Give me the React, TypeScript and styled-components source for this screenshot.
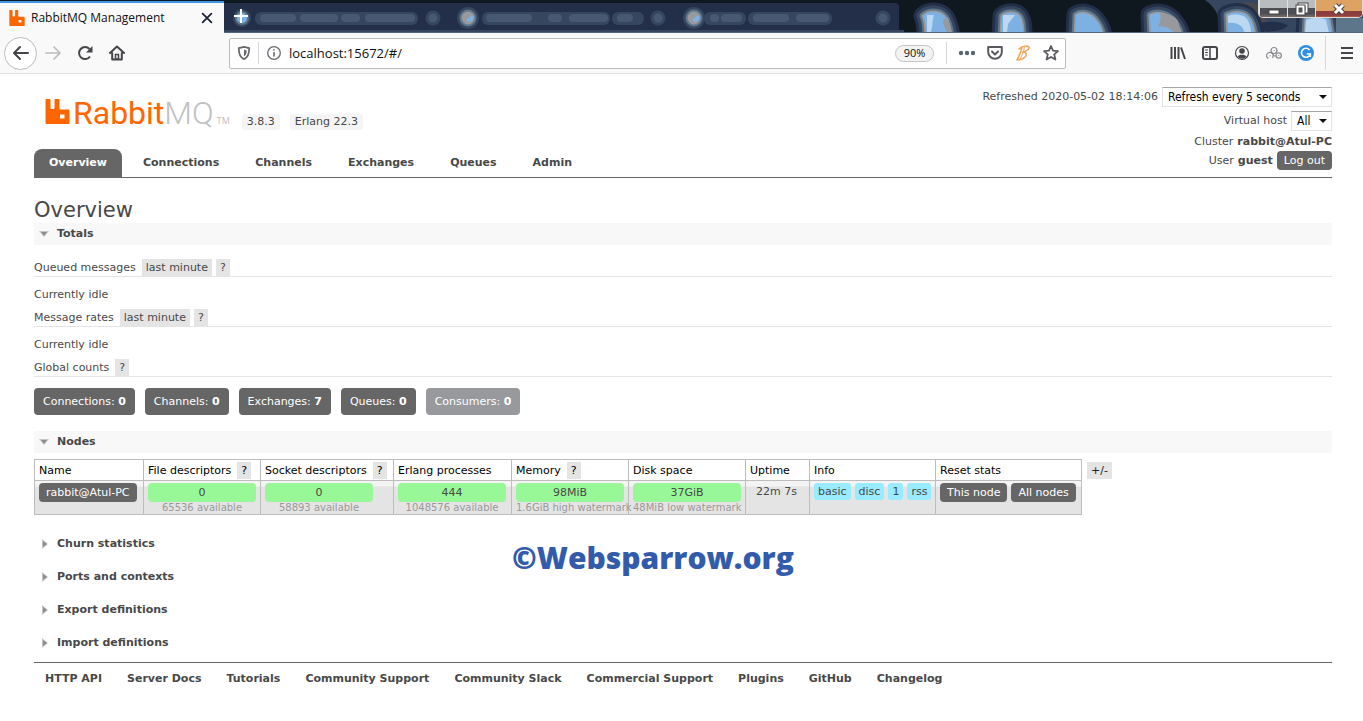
import React from 'react';
import styled, { createGlobalStyle, css } from 'styled-components';

const SANS = '"DejaVu Sans", Verdana, sans-serif';
const CHROME = '"Open Sans", "Segoe UI", sans-serif';

const GlobalStyle = createGlobalStyle`
  * { box-sizing: border-box; }
  body { margin: 0; background: #fff; color: #484848; font: 11px/18px ${SANS}; }
  button, input, select { font: inherit; color: inherit; margin: 0; }
  button { cursor: pointer; }
  a { color: inherit; text-decoration: none; }
`;

/* ---------- browser window ---------- */

const TabStrip = styled.div`
  position: relative;
  display: flex;
  height: 33px;
  background: #0f181e;
  overflow: hidden;
`;
const Backdrop = styled.svg`
  position: absolute;
  inset: 0;
  width: 100%;
  height: 33px;
`;
const ActiveTab = styled.div`
  position: relative;
  display: flex;
  align-items: center;
  width: 224px;
  margin-top: 1px;
  padding: 0 9px;
  gap: 6px;
  background: #f9f9fa;
  border-top: 2px solid #3f93e6;
  font: 12px/16px ${CHROME};
  color: #111;
`;
const TabTitle = styled.span`
  flex: 1;
`;
const BareButton = styled.button<{ $w?: number }>`
  display: flex;
  align-items: center;
  justify-content: center;
  flex: none;
  width: ${(p) => p.$w ?? 32}px;
  height: 32px;
  padding: 0;
  border: 0;
  background: none;
  color: #45454a;
`;
const NewTab = styled(BareButton)`
  position: relative;
`;
const WindowControls = styled.div`
  position: relative;
  display: flex;
  margin-left: auto;
  height: 18px;
  border: 1px solid #dcdcdc;
  border-top: 0;
  border-radius: 0 0 5px 5px;
  overflow: hidden;
`;
const WindowButton = styled.button<{ $close?: boolean }>`
  display: flex;
  align-items: center;
  justify-content: center;
  width: ${(p) => (p.$close ? 47 : 28)}px;
  padding: 0;
  border: 0;
  border-left: 1px solid #e0e0e0;
  background: ${(p) =>
    p.$close
      ? 'linear-gradient(#dea263 0 65%, #8d3d3d 65% 90%, #b55f45)'
      : 'linear-gradient(#b9bdc0 0 50%, #4c4f55 50% 80%, #7c6f66)'};
`;

const Toolbar = styled.div`
  display: flex;
  align-items: center;
  height: 41px;
  padding-left: 4px;
  background: #f9f9fa;
  border-bottom: 1px solid #e0e0e1;
`;
const BackButton = styled(BareButton)`
  height: 33px;
  width: 33px;
  border: 1px solid #bcbcbe;
  border-radius: 50%;
  background: #fff;
`;
const AddressBar = styled.div`
  display: flex;
  align-items: center;
  flex: 1;
  height: 31px;
  margin: 0 96px;
  background: #fff;
  border: 1px solid #bdbdbf;
  border-radius: 2px;
`;
const AddressInput = styled.input`
  flex: 1;
  min-width: 0;
  padding: 0;
  border: 0;
  outline: 0;
  background: none;
  font: 13px/18px ${CHROME};
  color: #111;
`;
const Divider = styled.span<{ $h: number }>`
  width: 1px;
  height: ${(p) => p.$h}px;
  background: #d7d7db;
`;
const ZoomPill = styled.button`
  width: 39px;
  height: 17px;
  margin-right: 12px;
  padding: 0;
  border: 1px solid #c4c4c6;
  border-radius: 9px;
  background: #f3f3f4;
  font: 11px/14px ${CHROME};
  color: #111;
`;
const PageActions = styled.div`
  display: flex;
  padding-left: 6px;
`;
const MenuArea = styled.div`
  display: flex;
  align-items: center;
  gap: 5px;
  padding-left: 3px;
`;

/* ---------- page ---------- */

const Page = styled.div`
  padding: 0 31px 0 34px;
`;
const Header = styled.header`
  display: flex;
  justify-content: space-between;
  padding-top: 13px;
  border-bottom: 1px solid #666;
`;
const Brand = styled.div`
  display: flex;
  flex-direction: column;
  justify-content: space-between;
`;
const LogoRow = styled.div`
  display: flex;
  align-items: flex-end;
  height: 43px;
  padding-left: 11px;
`;
const Logo = styled.a`
  display: flex;
  align-items: baseline;
  gap: 3px;
  margin-right: 12px;
  font: 300 32px/34px Roboto, sans-serif;
  color: #bfc1c2;
`;
const LogoName = styled.span`
  font-weight: 400;
  color: #f60;
`;
const LogoWord = styled.span``;
const Trademark = styled.small`
  font: 9px/12px "Open Sans", sans-serif;
`;
const Version = styled.span`
  height: 16px;
  margin-right: 10px;
  padding: 0 5px;
  border-radius: 3px;
  background: #f5f5f5;
  line-height: 16px;
`;
const Nav = styled.nav`
  display: flex;
  gap: 6px;
`;
const NavTab = styled.a<{ $active?: boolean }>`
  padding: 0 15px;
  border-radius: 8px 8px 0 0;
  font-weight: 700;
  line-height: 28px;
  ${(p) => p.$active && css`background: #666; color: #fff;`}
`;
const Status = styled.div`
  display: flex;
  flex-direction: column;
  align-items: flex-end;
  padding-bottom: 7px;
`;
const SelectLines = styled.div`
  display: flex;
  flex-direction: column;
  align-items: flex-end;
  gap: 4px;
  padding-bottom: 1px;
`;
const StatusLine = styled.div`
  display: flex;
  align-items: center;
  gap: 4px;
  height: 19px;
`;
const SelectLine = styled(StatusLine)`
  height: 20px;
`;
const SelectBox = styled.span<{ $w: number }>`
  position: relative;
  width: ${(p) => p.$w}px;
  height: 20px;
  &::after {
    content: '';
    position: absolute;
    right: 5px;
    top: 8px;
    border: 4px solid transparent;
    border-top-color: #111;
    border-bottom: 0;
    pointer-events: none;
  }
`;
const Select = styled.select`
  appearance: none;
  width: 100%;
  height: 20px;
  padding: 0 5px;
  border: 1px solid #e3e3e3;
  border-top-color: #a5a7aa;
  border-radius: 0;
  background: #fff;
  font: 12px/18px "DejaVu Sans Condensed", Tahoma, sans-serif;
  color: #000;
`;
const DarkButton = styled.button`
  height: 19px;
  padding: 0 7px;
  border: 0;
  border-radius: 4px;
  background: #666;
  color: #fff;
  line-height: 19px;
  white-space: nowrap;
`;
const Title = styled.h1`
  margin: 20px 0 0;
  font-size: 21px;
  font-weight: 400;
  line-height: 25px;
`;
const SectionHeading = styled.h2<{ $open?: boolean }>`
  margin: 0 0 ${(p) => (p.$open ? 0 : 11)}px;
  background: ${(p) => (p.$open ? '#f8f8f8' : 'none')};
  font-size: 11px;
  line-height: 22px;
  &:last-child { margin-bottom: 8px; }
`;
const Toggle = styled.button`
  display: flex;
  align-items: center;
  gap: 8px;
  height: 22px;
  padding: 0 5px;
  border: 0;
  background: none;
  font-weight: 700;
`;
const Totals = styled.div`
  padding: 14px 0 16px;
`;
const SubHeading = styled.h3`
  display: flex;
  gap: 4px;
  margin: 0;
  border-bottom: 1px solid #e4e4e4;
  font-size: 11px;
  font-weight: 400;
  line-height: 17px;
`;
const Label = styled.span`
  padding-right: 2px;
`;
const Chip = styled.button`
  height: 17px;
  padding: 0 4px;
  border: 0;
  background: #e4e4e4;
  line-height: 17px;
`;
const Idle = styled.p`
  margin: 0;
  padding: 9px 0 5px;
`;
const Counts = styled.div`
  display: flex;
  gap: 10px;
  margin-top: 11px;
`;
const Count = styled.a<{ $muted?: boolean }>`
  padding: 0 9px;
  border-radius: 4px;
  background: ${(p) => (p.$muted ? '#98999c' : '#666')};
  color: #fff;
  line-height: 27px;
`;
const NodesRow = styled.div`
  display: flex;
  align-items: flex-start;
  gap: 5px;
  margin: 6px 0 18px;
`;
const NodeTable = styled.table`
  width: 1048px;
  table-layout: fixed;
  border-collapse: collapse;
  th, td { border: 1px solid #bdbdbd; text-align: left; vertical-align: top; white-space: nowrap; }
  th { height: 21px; padding: 2px 0 1px 4px; font-weight: 400; line-height: 17px; color: #000; }
  td { height: 34px; padding: 2px 0 0 4px; }
  tbody tr { background: linear-gradient(#f4f4f4 0 5px, #e4e4e4 6px); }
`;
const Inline = styled.div<{ $center?: boolean }>`
  display: flex;
  gap: 4px;
  justify-content: ${(p) => (p.$center ? 'center' : 'flex-start')};
  padding-right: ${(p) => (p.$center ? 6 : 0)}px;
`;
const Meter = styled.div`
  width: 108px;
  border-radius: 4px;
  background: #98f898;
  text-align: center;
  line-height: 19px;
`;
const MeterNote = styled.div`
  width: 108px;
  display: flex;
  justify-content: safe center;
  color: #999;
  font-size: 10px;
  line-height: 11px;
`;
const InfoTag = styled.abbr`
  height: 17px;
  padding: 0 4px;
  border-radius: 3px;
  background: #99ebff;
  line-height: 17px;
`;
const ColumnToggle = styled(Chip)`
  margin-top: 3px;
  color: #222;
`;
const Footer = styled.footer`
  display: flex;
  gap: 25px;
  padding: 7px 11px 22px;
  border-top: 1px solid #666;
  font-weight: 700;
`;
const Watermark = styled.div`
  position: absolute;
  left: 512px;
  top: 538px;
  font: 800 30px/40px "Open Sans", sans-serif;
  color: #335bac;
  pointer-events: none;
`;

/* ---------- drawings ---------- */

const RabbitMark = ({ size }: { size: number }) => (
  <svg width={size} height={size} viewBox="0 0 24 25" aria-hidden="true">
    <path
      fill="#f60"
      fillRule="evenodd"
      d="M1 0h3q1 0 1 1v8q0 1 1 1h2q1 0 1-1V1q0-1 1-1h3q1 0 1 1v8q0 1.500 1 1.500h8q1 0 1 1V24q0 1-1 1H1q-1 0-1-1V1q0-1 1-1zM14.500 15.500v4h4.500v-4z"
    />
  </svg>
);

const Icon = ({ children, size = 16 }: { children: React.ReactNode; size?: number }) => (
  <svg
    width={size}
    height={size}
    viewBox="0 0 16 16"
    fill="none"
    stroke="currentColor"
    strokeWidth="2"
    strokeLinecap="round"
    strokeLinejoin="round"
    aria-hidden="true"
  >
    {children}
  </svg>
);

const Arrow = ({ open }: { open?: boolean }) => (
  <svg width="10" height="10" viewBox="0 0 10 10" aria-hidden="true">
    {open ? (
      <>
        <path d="M0 2h10L5 8z" fill="#c4c4c6" />
        <path d="M2 3h6L5 7z" fill="#8b8c90" />
      </>
    ) : (
      <>
        <path d="M3 0v10l6-5z" fill="#c4c4c6" />
        <path d="M4 2v6L8 5z" fill="#8b8c90" />
      </>
    )}
  </svg>
);

const HALO: [string, number][] = [
  ['#232f49', 19],
  ['#36465f', 13],
  ['#5e768a', 7],
  ['#98999c', 3],
];

const GLOWS = [
  { d: 'M926 36c0-10-1-16-3-20 6-6 17-5 22 1 4 6 5 12 6 19z', hi: 'M927 15h7c-2 7-1 10-3 17h-4z' },
  { d: 'M1001 36l1-20c4-4 14-5 18 1 3 5 3 12 3 19z', hi: 'M1003 15h12l-7 9-1 9h-4z' },
  { d: 'M1075 36l1-21c7-4 15-1 19 4 5 6 7 10 8 17z', hi: '' },
  { d: 'M1151 36l-1-21c8-4 17-1 22 4 5 6 8 10 9 17z', hi: '' },
  { d: 'M1228 36l-1-21c8-4 18-3 22 3 4 5 5 11 6 18z', hi: 'M1228 16c8-3 16-1 19 3 3 5 4 9 4 13h-7c0-5-6-10-16-9z' },
  { d: 'M1305 36l1-18c6-3 18-3 23 2l3 16z', hi: 'M1306 20c8-3 15-3 20 0l3 13h-24z' },
];

/* x and width of the hazy title shapes on the inactive tabs */
const HAZE: [number, number][] = [[255, 163], [482, 128], [612, 32], [704, 42], [748, 84]];
const SMUDGES: [number, number][] = [
  [260, 36], [300, 38], [341, 19], [365, 50],
  [486, 46], [548, 14], [569, 39], [617, 16],
  [710, 9], [721, 21], [753, 36], [796, 33],
];

const StripBackdrop = () => (
  <Backdrop viewBox="0 0 1363 33" preserveAspectRatio="xMaxYMin slice" aria-hidden="true">
    <path d="M224 3h671q4 0 4 4v26H224z" fill="#232f49" />
    <path d="M1205 0h158v33h-140c-2-12-6-25-18-33z" fill="#36465f" />
    <path d="M1228 8c12-8 28-7 36 2l4 23h-20z" fill="#4b4a49" />
    <path d="M1256 24c14-4 28-2 32 2-8 6-22 7-32 4z" fill="#232f49" />
    {HAZE.map(([x, w]) => (
      <rect key={x} x={x} y="12" width={w} height="13" rx="6" fill="#36465f" />
    ))}
    {SMUDGES.map(([x, w]) => (
      <rect key={x} x={x} y="14" width={w} height="8" rx="4" fill="#475873" />
    ))}
    {[433, 658, 883].map((x) => (
      <g key={x}>
        <circle cx={x} cy="18" r="7.500" fill="#36465f" />
        <circle cx={x} cy="18" r="4.500" fill="#475873" />
      </g>
    ))}
    {[468, 694].map((x) => (
      <g key={x}>
        <circle cx={x} cy="18" r="11" fill="#36465f" />
        <circle cx={x} cy="18" r="8.500" fill="#5e768a" />
        <circle cx={x} cy="18" r="6.500" fill="#98999c" />
        <path d={`M${x - 2} 20l6-5q3 2 0 6-4 2-6-1z`} fill="#7db1e4" />
      </g>
    ))}
    <circle cx="242" cy="18" r="9" fill="#36465f" />
    <circle cx="242" cy="18" r="7" fill="#5e768a" />
    <circle cx="242" cy="18" r="5" fill="#7db1e4" />
    <path d="M224 30h680v3H224z" fill="#36465f" />
    {HALO.map(([stroke, w]) =>
      GLOWS.map((g, i) => (
        <path key={stroke + i} d={g.d} fill={stroke} stroke={stroke} strokeWidth={w} strokeLinejoin="round" />
      )),
    )}
    <path d="M1336 18h27v15h-27z" fill="#5e768a" />
    {GLOWS.map((g, i) => (
      <g key={i}>
        <path d={g.d} fill="#7db1e4" />
        <path d={g.hi} fill="#bcd8f0" />
      </g>
    ))}
    <path d="M943 20l5-3 4 16h-4q-5-7-5-13z" fill="#98999c" />
    <path d="M1160 13q12 0 18 8l3 12h-7q-3-6-16-7 4-6 2-13z" fill="#98999c" />
    <path d="M224 32h1139v1H224z" fill="#536781" />
  </Backdrop>
);

/* ---------- data ---------- */

const NAV = ['Overview', 'Connections', 'Channels', 'Exchanges', 'Queues', 'Admin'];
const COUNTS: [string, number][] = [
  ['Connections', 0], ['Channels', 0], ['Exchanges', 7], ['Queues', 0], ['Consumers', 0],
];
const COLUMNS: { name: string; width: number; help?: boolean }[] = [
  { name: 'Name', width: 109 },
  { name: 'File descriptors', width: 117, help: true },
  { name: 'Socket descriptors', width: 133, help: true },
  { name: 'Erlang processes', width: 118 },
  { name: 'Memory', width: 117, help: true },
  { name: 'Disk space', width: 117 },
  { name: 'Uptime', width: 64 },
  { name: 'Info', width: 126 },
  { name: 'Reset stats', width: 146 },
];
const METERS = [
  ['0', '65536 available'],
  ['0', '58893 available'],
  ['444', '1048576 available'],
  ['98MiB', '1.6GiB high watermark'],
  ['37GiB', '48MiB low watermark'],
];
const CLOSED = ['Churn statistics', 'Ports and contexts', 'Export definitions', 'Import definitions'];
const LINKS = [
  'HTTP API', 'Server Docs', 'Tutorials', 'Community Support', 'Community Slack',
  'Commercial Support', 'Plugins', 'GitHub', 'Changelog',
];

const Section = ({ name, open }: { name: string; open?: boolean }) => (
  <SectionHeading $open={open}>
    <Toggle aria-expanded={!!open}>
      <Arrow open={open} />
      {name}
    </Toggle>
  </SectionHeading>
);

const BrowserChrome = () => (
  <>
    <TabStrip>
      <StripBackdrop />
      <ActiveTab>
        <RabbitMark size={16} />
        <TabTitle>RabbitMQ Management</TabTitle>
        <BareButton $w={16} aria-label="Close tab">
          <Icon size={14}><path d="M3 3l10 10M13 3L3 13" stroke="#16202e" /></Icon>
        </BareButton>
      </ActiveTab>
      <NewTab $w={34} aria-label="New tab">
        <Icon><path d="M8 1v14M1 8h14" stroke="#fff" strokeLinecap="butt" /></Icon>
      </NewTab>
      <WindowControls>
        <WindowButton aria-label="Minimize">
          <svg width="12" height="14"><rect x="1" y="8" width="10" height="4" fill="#fff" stroke="#444" /></svg>
        </WindowButton>
        <WindowButton aria-label="Restore">
          <svg width="14" height="14" fill="none">
            <path d="M4.500 2.500h7v7h-7z" stroke="#444" strokeWidth="4" />
            <path d="M4.500 2.500h7v7h-7z" stroke="#fff" strokeWidth="2" />
            <path d="M2.500 4.500h6v7h-6z" fill="#555" stroke="#444" strokeWidth="4" />
            <path d="M2.500 4.500h6v7h-6z" fill="#555" stroke="#fff" strokeWidth="2" />
          </svg>
        </WindowButton>
        <WindowButton $close aria-label="Close">
          <svg width="14" height="14" fill="none">
            <path d="M3 3l8 8M11 3l-8 8" stroke="#444" strokeWidth="5" />
            <path d="M3 3l8 8M11 3l-8 8" stroke="#fff" strokeWidth="3" />
          </svg>
        </WindowButton>
      </WindowControls>
    </TabStrip>
    <Toolbar>
      <BackButton aria-label="Back">
        <Icon><path d="M15 8H1.500M7 2L1 8l6 6" /></Icon>
      </BackButton>
      <BareButton aria-label="Forward">
        <Icon><path d="M1 8h13.500M9 2l6 6-6 6" stroke="#bcbcbe" strokeWidth="1.700" /></Icon>
      </BareButton>
      <BareButton aria-label="Reload">
        <Icon>
          <path d="M13 11.500A6 6 0 1 1 12.500 4" strokeLinecap="butt" />
          <path d="M15.500 1v6.500H9z" fill="currentColor" stroke="none" />
        </Icon>
      </BareButton>
      <BareButton aria-label="Home">
        <Icon>
          <path d="M1 8l7-6.500L15 8M3.200 8v6.500h9.600V8" />
          <path d="M6.500 14V9.500h3V14z" strokeWidth="1.500" />
        </Icon>
      </BareButton>
      <AddressBar>
        <BareButton $w={28} aria-label="Tracking protection">
          <Icon size={14}>
            <path d="M8 1L14 2.500C14 9 12.500 13 8 15 3.500 13 2 9 2 2.500z" stroke="#65666c" />
            <path d="M8 4v8c2.500-2 3-4 3-7z" fill="#65666c" stroke="none" />
          </Icon>
        </BareButton>
        <Divider $h={22} />
        <BareButton $w={30} aria-label="Site information">
          <Icon>
            <circle cx="8" cy="8" r="6.300" stroke="#6a6a70" strokeWidth="1.300" />
            <path d="M8 7.500v3.500M8 4.900v.1" stroke="#6a6a70" strokeWidth="1.600" />
          </Icon>
        </BareButton>
        <AddressInput aria-label="Address" defaultValue="localhost:15672/#/" />
        <ZoomPill>90%</ZoomPill>
        <Divider $h={22} />
        <PageActions>
          <BareButton $w={28} aria-label="Page actions">
            <svg width="18" height="6" viewBox="0 0 18 6" fill="#5c6572">
              <circle cx="3" cy="3" r="2.200" /><circle cx="9" cy="3" r="2.200" /><circle cx="15" cy="3" r="2.200" />
            </svg>
          </BareButton>
          <BareButton $w={28} aria-label="Save to Pocket">
            <Icon>
              <path d="M1.200 2h13.600v5a6.800 6.800 0 0 1-13.600 0z" stroke="#5a5b60" />
              <path d="M5 6.500l3 3 3-3" stroke="#5a5b60" />
            </Icon>
          </BareButton>
          <BareButton $w={28} aria-label="Extension">
            <Icon>
              <g stroke="#f4a55c" strokeWidth="1.500">
                <path d="M7 2C6 7 5 10 2 15M4 4c3-3 8-4 10-2 1 2-3 4.500-6.500 5C12 7 12 9.500 10 12c-2 2-5 3-8 3" />
                <path d="M9.500 2C8.500 7 7 11 5 14" strokeWidth="1" />
              </g>
            </Icon>
          </BareButton>
          <BareButton $w={28} aria-label="Bookmark">
            <Icon>
              <path
                d="M8 1l2 4.600 5 .5-3.800 3.300L12.400 14.500 8 11.900 3.600 14.500l1.200-5.100L1 6.100l5-.5z"
                stroke="#5a5b60"
                strokeWidth="1.800"
              />
            </Icon>
          </BareButton>
        </PageActions>
      </AddressBar>
      <BareButton aria-label="Library">
        <Icon><path d="M1.500 2v12M5 2v12M8.500 2v12M11 2.500l4 11.500" strokeLinecap="butt" /></Icon>
      </BareButton>
      <BareButton aria-label="Sidebars">
        <Icon>
          <rect x="1" y="2" width="14" height="12" rx="2" />
          <path d="M8 2v12" strokeWidth="1.500" />
          <path d="M3.500 5h2M3.500 7.500h2M3.500 10h2" strokeWidth="1" />
        </Icon>
      </BareButton>
      <BareButton aria-label="Account">
        <Icon>
          <circle cx="8" cy="8" r="6.500" strokeWidth="1.200" />
          <circle cx="8" cy="6" r="2.800" fill="currentColor" stroke="none" />
          <path d="M3.500 11.500C5 9 11 9 12.500 11.500 10 14.500 6 14.500 3.500 11.500z" fill="currentColor" stroke="none" />
        </Icon>
      </BareButton>
      <BareButton aria-label="Extension controls">
        <Icon>
          <g stroke="#8b8c90" strokeWidth="1.200">
            <circle cx="8" cy="5.500" r="3" />
            <path d="M2 13.300A3.200 3.200 0 1 1 6.500 12.500M4 10.800h.1" />
            <circle cx="12.700" cy="10.500" r="2.700" />
            <path d="M8 5.500h.1M12.700 10.500h.1M6.500 8.500l2 2.500h1" />
          </g>
        </Icon>
      </BareButton>
      <BareButton aria-label="Grammar checker">
        <svg width="16" height="16" viewBox="0 0 16 16" fill="none">
          <circle cx="8" cy="8" r="8" fill="#2f8fe0" />
          <path d="M11.500 5A4.500 4.500 0 1 0 12.300 9H8.800M12.300 8.500V12" stroke="#fff" strokeWidth="1.600" />
        </svg>
      </BareButton>
      <MenuArea>
        <Divider $h={34} />
        <BareButton aria-label="Open menu">
          <Icon><path d="M2 3h12M2 8h12M2 13h12" strokeLinecap="butt" /></Icon>
        </BareButton>
      </MenuArea>
    </Toolbar>
  </>
);

const App = () => (
  <>
    <GlobalStyle />
    <BrowserChrome />
    <Page>
      <Header>
        <Brand>
          <LogoRow>
            <Logo href="#/" aria-label="RabbitMQ">
              <RabbitMark size={25} />
              <LogoWord><LogoName>Rabbit</LogoName>MQ</LogoWord>
              <Trademark>TM</Trademark>
            </Logo>
            <Version>3.8.3</Version>
            <Version>Erlang 22.3</Version>
          </LogoRow>
          <Nav>
            {NAV.map((n, i) => (
              <NavTab key={n} href={`#/${n.toLowerCase()}`} $active={i === 0}>{n}</NavTab>
            ))}
          </Nav>
        </Brand>
        <Status>
          <SelectLines>
            <SelectLine>
              <label htmlFor="refresh">Refreshed 2020-05-02 18:14:06</label>
              <SelectBox $w={170}>
                <Select id="refresh"><option>Refresh every 5 seconds</option></Select>
              </SelectBox>
            </SelectLine>
            <SelectLine>
              <label htmlFor="vhost">Virtual host</label>
              <SelectBox $w={41}>
                <Select id="vhost"><option>All</option></Select>
              </SelectBox>
            </SelectLine>
          </SelectLines>
          <StatusLine>Cluster <b>rabbit@Atul-PC</b></StatusLine>
          <StatusLine>User <b>guest</b> <DarkButton>Log out</DarkButton></StatusLine>
        </Status>
      </Header>
      <main>
        <Title>Overview</Title>
        <Section name="Totals" open />
        <Totals>
          <SubHeading><Label>Queued messages</Label><Chip>last minute</Chip><Chip>?</Chip></SubHeading>
          <Idle>Currently idle</Idle>
          <SubHeading><Label>Message rates</Label><Chip>last minute</Chip><Chip>?</Chip></SubHeading>
          <Idle>Currently idle</Idle>
          <SubHeading><Label>Global counts</Label><Chip>?</Chip></SubHeading>
          <Counts>
            {COUNTS.map(([name, n]) => (
              <Count key={name} href={`#/${name.toLowerCase()}`} $muted={name === 'Consumers'}>
                {name}: <b>{n}</b>
              </Count>
            ))}
          </Counts>
        </Totals>
        <Section name="Nodes" open />
        <NodesRow>
          <NodeTable>
            <colgroup>
              {COLUMNS.map((c) => <col key={c.name} width={c.width} />)}
            </colgroup>
            <thead>
              <tr>
                {COLUMNS.map((c) => (
                  <th key={c.name} scope="col">
                    <Inline><Label>{c.name}</Label>{c.help && <Chip>?</Chip>}</Inline>
                  </th>
                ))}
              </tr>
            </thead>
            <tbody>
              <tr>
                <td><DarkButton>rabbit@Atul-PC</DarkButton></td>
                {METERS.map(([value, note]) => (
                  <td key={note}>
                    <Meter>{value}</Meter>
                    <MeterNote>{note}</MeterNote>
                  </td>
                ))}
                <td><Inline $center>22m 7s</Inline></td>
                <td>
                  <Inline>
                    {['basic', 'disc', '1', 'rss'].map((t) => <InfoTag key={t}>{t}</InfoTag>)}
                  </Inline>
                </td>
                <td>
                  <Inline><DarkButton>This node</DarkButton><DarkButton>All nodes</DarkButton></Inline>
                </td>
              </tr>
            </tbody>
          </NodeTable>
          <ColumnToggle>+/-</ColumnToggle>
        </NodesRow>
        {CLOSED.map((name) => <Section key={name} name={name} />)}
      </main>
      <Footer>
        {LINKS.map((l) => <a key={l} href="#/">{l}</a>)}
      </Footer>
    </Page>
    <Watermark>©Websparrow.org</Watermark>
  </>
);

export default App;
